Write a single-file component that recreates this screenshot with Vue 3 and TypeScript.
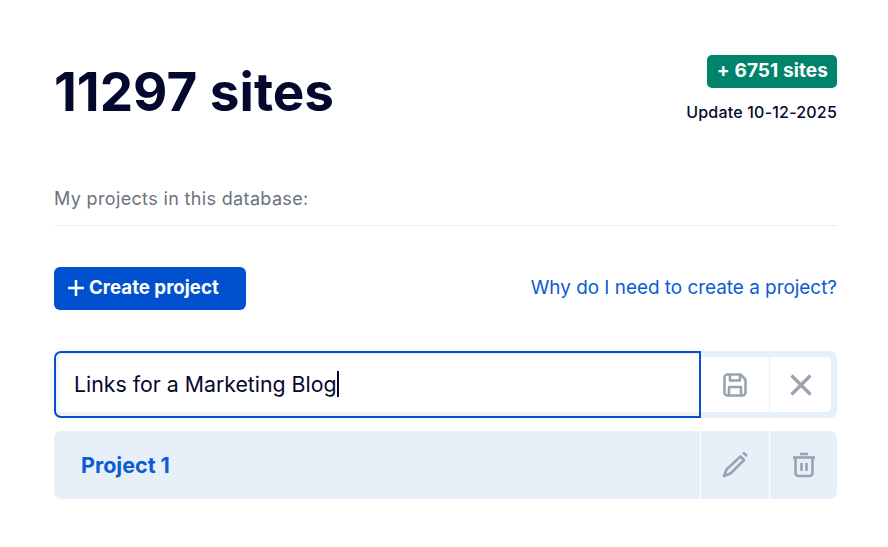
<script setup lang="ts">
import { ref } from 'vue'

const projectName = ref('Links for a Marketing Blog')
</script>

<template>
  <div class="page">
    <header class="stats">
      <h1 class="total">11297 sites</h1>
      <div class="update">
        <span class="badge">+ 6751 sites</span>
        <span class="date">Update 10-12-2025</span>
      </div>
    </header>

    <p class="section-title">My projects in this database:</p>

    <div class="toolbar">
      <button class="create-btn">
        <svg width="20" height="20" viewBox="0 0 20 20" fill="none" stroke="#fff" stroke-width="2.6">
          <path d="M10 2v16M2 10h16" />
        </svg>
        Create project
      </button>
      <a class="why-link" href="#">Why do I need to create a project?</a>
    </div>

    <div class="row editing">
      <div class="input-box">
        <span class="input-text">{{ projectName }}</span><span class="caret"></span>
      </div>
      <div class="edit-actions">
        <button class="action">
          <svg width="26" height="26" viewBox="0 0 26 26" fill="none" stroke="#9aa3b2" stroke-width="2.6" stroke-linejoin="round">
            <path d="M5.5 2.5h13l5 5v13a3 3 0 0 1-3 3h-15a3 3 0 0 1-3-3v-15a3 3 0 0 1 3-3z" />
            <path d="M8 3v5.5h10V3" />
            <path d="M7 23.5V15h12v8.5" />
          </svg>
        </button>
        <button class="action">
          <svg width="26" height="26" viewBox="0 0 26 26" fill="none" stroke="#9aa3b2" stroke-width="3.2">
            <path d="M3.5 3.5l19 19M22.5 3.5l-19 19" />
          </svg>
        </button>
      </div>
    </div>

    <div class="row saved">
      <a class="project-name" href="#">Project 1</a>
      <button class="action">
        <svg width="28" height="28" viewBox="0 0 28 28" fill="none" stroke="#9aa3b2" stroke-width="2.6" stroke-linejoin="round">
          <path d="M19.5 5.5l3.5 3.5L9.5 22.5l-6.5 2.5 2.5-6.5z" />
          <path d="M22 1.5l4 3.5" />
        </svg>
      </button>
      <button class="action">
        <svg width="24" height="26" viewBox="0 0 24 26" fill="none" stroke="#9aa3b2" stroke-width="2.6" stroke-linejoin="round">
          <path d="M1 5.5h22" />
          <path d="M8 2h8" />
          <path d="M3.5 6v15a3 3 0 0 0 3 3h11a3 3 0 0 0 3-3V6" />
          <path d="M9.5 11v8M14.5 11v8" />
        </svg>
      </button>
    </div>
  </div>
</template>

<style>
html,
body {
  margin: 0;
  background: #fff;
}
</style>

<style scoped>
.page {
  padding: 55px 51px 0 54px;
  font-family: Inter, "Liberation Sans", sans-serif;
  color: #04082e;
}

.stats {
  display: flex;
  justify-content: space-between;
  align-items: flex-start;
  height: 132px;
}

.total {
  margin: 0;
  font-size: 53px;
  line-height: 74px;
  font-weight: 700;
}

.update {
  display: flex;
  flex-direction: column;
  align-items: flex-end;
  gap: 14px;
}

.badge {
  padding: 0 9px 0 10px;
  height: 33px;
  line-height: 32px;
  border-radius: 5px;
  background: #00836b;
  color: #fff;
  font-size: 19px;
  font-weight: 700;
  letter-spacing: 0.1px;
}

.date {
  font-size: 16px;
  line-height: 20px;
  font-weight: 500;
  letter-spacing: 0.2px;
}

.section-title {
  margin: 0;
  padding-bottom: 14px;
  border-bottom: 1px solid #e8edf3;
  font-size: 18px;
  line-height: 24px;
  letter-spacing: 0.35px;
  color: #6b7280;
}

.toolbar {
  display: flex;
  justify-content: space-between;
  align-items: center;
  margin-top: 41px;
}

.create-btn {
  display: flex;
  align-items: center;
  gap: 3px;
  height: 43px;
  width: 192px;
  padding: 0 0 2px 12px;
  border: 0;
  border-radius: 6px;
  background: #0050cf;
  color: #fff;
  font: 700 18.7px Inter, sans-serif;
}

.why-link {
  padding-bottom: 2px;
  font-size: 18.9px;
  color: #0b5bd3;
  text-decoration: none;
}

.row {
  display: flex;
  border-radius: 7px;
  background: #e7eff9;
}

.editing {
  height: 67px;
  margin-top: 41px;
}

.input-box {
  flex: 1;
  display: flex;
  align-items: center;
  padding: 0 18px 2px;
  border: 2px solid #0050cf;
  border-radius: 7px 0 0 7px;
  background: #fff;
  box-shadow: inset 3px 1px 0 #eef3fa, inset 0 -4px 0 #eef3fa;
  font-size: 21.3px;
}

.caret {
  width: 2px;
  height: 26px;
  background: #04082e;
}

.edit-actions {
  display: flex;
  margin: 6px 6px 6px 0;
  border-radius: 0 5px 5px 0;
  background: #fff;
}

.edit-actions .action {
  width: 68px;
}

.edit-actions .action + .action {
  width: 62px;
  border-left: 1px solid #e7eff9;
}

.saved {
  align-items: stretch;
  height: 68px;
  margin-top: 13px;
}

.project-name {
  flex: 1;
  align-self: center;
  padding-left: 27px;
  color: #0b5bd3;
  font-size: 21.5px;
  font-weight: 700;
  text-decoration: none;
}

.action {
  display: flex;
  align-items: center;
  justify-content: center;
  padding: 0;
  border: 0;
  background: transparent;
}

.saved .action {
  width: 69px;
  border-left: 1px solid #fff;
}

.saved .action + .action {
  width: 68px;
}
</style>
